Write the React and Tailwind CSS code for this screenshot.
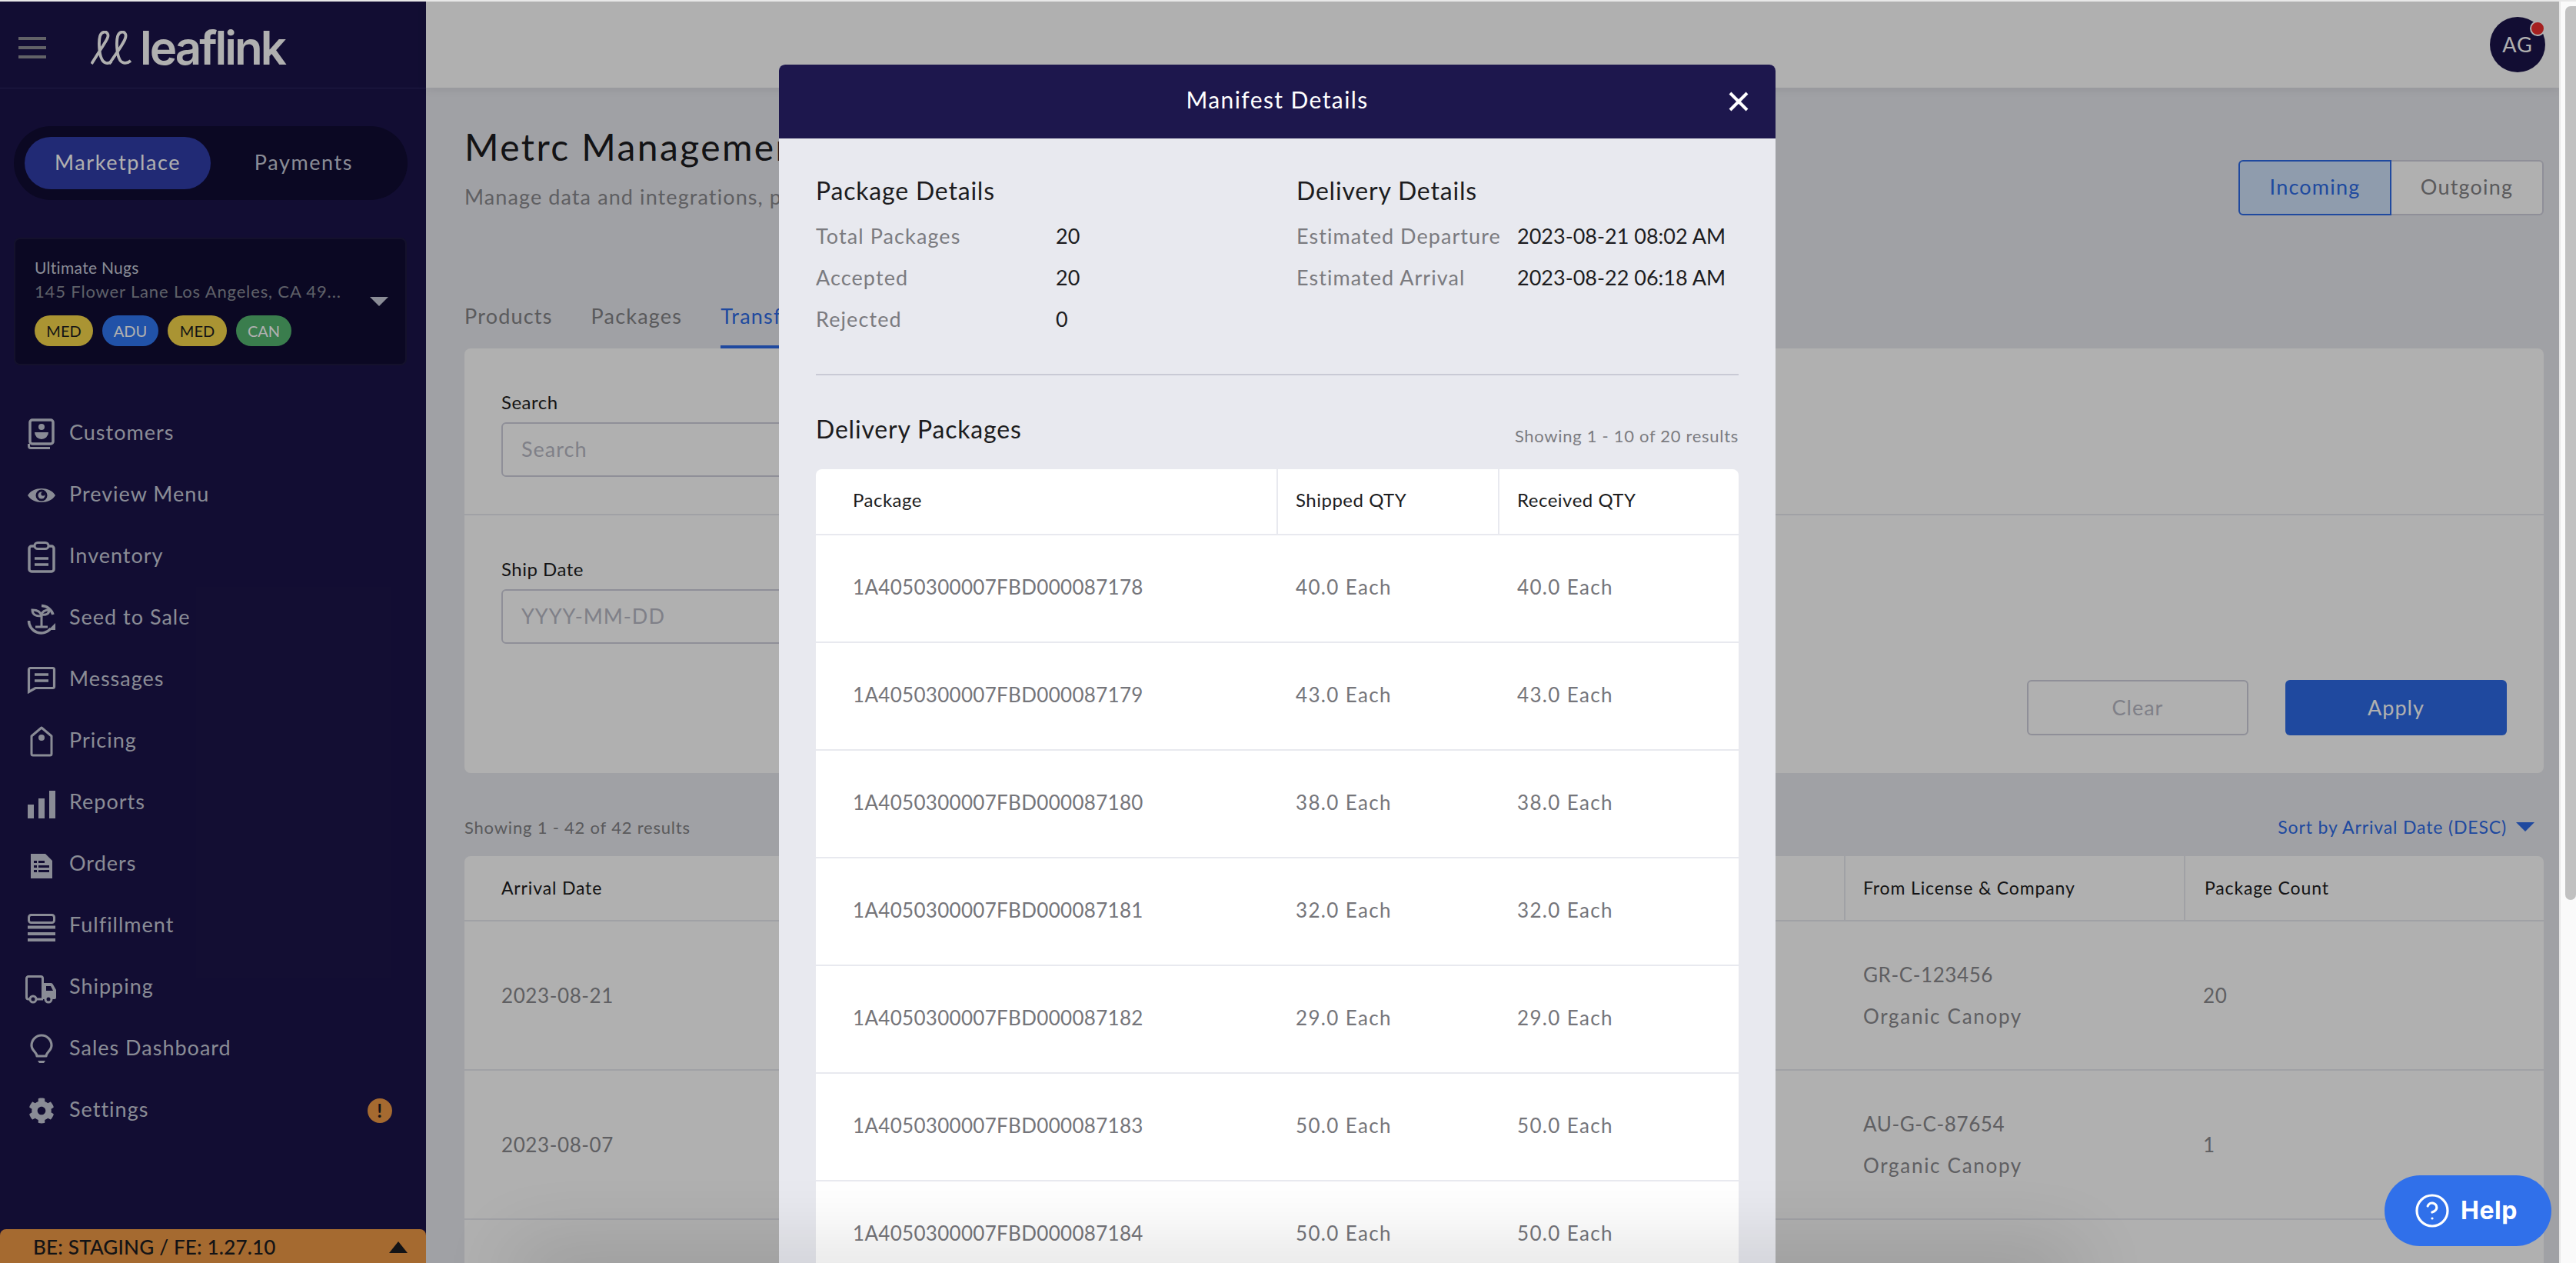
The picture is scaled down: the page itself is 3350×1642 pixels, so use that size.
import React from 'react';
import { CircleHelp } from 'lucide-react';
import { FaCog } from 'react-icons/fa';

const BG = '#1b144a';

// sidebar icons, all on the same 36x40 box
const icons = {
  customers: (
    <>
      <rect x="3" y="2" width="30" height="31" rx="3" fill="none" stroke="currentColor" strokeWidth="3.5" />
      <path d="M1.5 33v3a2.5 2.5 0 0 0 2.5 2.5h25" fill="none" stroke="currentColor" strokeWidth="3" />
      <circle cx="18" cy="11" r="4" fill="currentColor" />
      <path d="M9 18h18a9 9 0 0 1-18 0z" fill="currentColor" />
    </>
  ),
  eye: (
    <>
      <path d="M0 20C7 8 29 8 36 20 29 32 7 32 0 20z" fill="currentColor" />
      <circle cx="18" cy="20" r="7.5" fill={BG} />
      <circle cx="18" cy="20" r="4.5" fill="currentColor" />
      <circle cx="20" cy="18" r="2.6" fill={BG} />
    </>
  ),
  inventory: (
    <>
      <rect x="2" y="6" width="32" height="33" rx="3" fill="none" stroke="currentColor" strokeWidth="3.5" />
      <rect x="9" y="1.5" width="18" height="8" rx="4" fill={BG} stroke="currentColor" strokeWidth="3" />
      <path d="M9 22h18M9 30h18" stroke="currentColor" strokeWidth="3.5" />
    </>
  ),
  seed: (
    <>
      <path d="M18 3.5A16 16 0 0 1 33 15M1.5 23A16 16 0 0 0 30 33" fill="none" stroke="currentColor" strokeWidth="3.5" />
      <path d="M36 26v9h-9z" fill="currentColor" />
      <path d="M18 31V17M18 17c-1-6-5-8-12-8 0 6 4 8 12 8zM18 15c1-4 4-6 10-6 0 5-4 7-10 6z" fill="none" stroke="currentColor" strokeWidth="3" />
      <path d="M10 31h16" stroke="currentColor" strokeWidth="3" />
    </>
  ),
  messages: (
    <>
      <path d="M1.5 6.500a2 2 0 0 1 2-2h29a2 2 0 0 1 2 2v22a2 2 0 0 1-2 2H10l-8.500 5z" fill="none" stroke="currentColor" strokeWidth="3.2" />
      <path d="M9 13h18M9 21h18" stroke="currentColor" strokeWidth="3.5" />
    </>
  ),
  pricing: (
    <>
      <path d="M18 2l13 11v23a2 2 0 0 1-2 2H7a2 2 0 0 1-2-2V13z" fill="none" stroke="currentColor" strokeWidth="3" strokeLinejoin="round" />
      <circle cx="18" cy="15" r="4" fill="currentColor" />
    </>
  ),
  reports: (
    <>
      <rect x="0" y="22" width="8" height="18" fill="currentColor" />
      <rect x="14" y="14" width="8" height="26" fill="currentColor" />
      <rect x="28" y="4" width="8" height="36" fill="currentColor" />
    </>
  ),
  orders: (
    <>
      <path d="M4 6h19l9 9v23H4z" fill="currentColor" />
      <path d="M8 15h4v3H8zM14 15h8v3h-8zM8 21h4v3H8zM14 21h14v3H14zM8 27h4v3H8zM14 27h14v3H14z" fill={BG} />
    </>
  ),
  fulfillment: (
    <>
      <rect x="1.5" y="5.5" width="33" height="10" rx="3" fill="none" stroke="currentColor" strokeWidth="3" />
      <path d="M0 21.5h36M0 30h36M0 38h36" stroke="currentColor" strokeWidth="3.8" />
    </>
  ),
  shipping: (
    <>
      <path d="M4 35H1a2.500 2.500 0 0 1-2.500-2.500V8A2.500 2.500 0 0 1 1 5.500h16A2.500 2.500 0 0 1 19.500 8v27" fill="none" stroke="currentColor" strokeWidth="3" />
      <path d="M20 14h10a3 3 0 0 1 3 2l4 7v10a2 2 0 0 1-2 2H20z" fill="currentColor" />
      <path d="M24 18h6l3 6h-9z" fill={BG} />
      <path d="M4 35h16" stroke="currentColor" strokeWidth="3" />
      <circle cx="7" cy="35" r="4" fill={BG} stroke="currentColor" strokeWidth="3" />
      <circle cx="27" cy="35" r="4" fill={BG} stroke="currentColor" strokeWidth="3" />
    </>
  ),
  bulb: (
    <>
      <path d="M12 29c0-5-7-7-7-14a13 13 0 0 1 26 0c0 7-7 9-7 14z" fill="none" stroke="currentColor" strokeWidth="3.2" strokeLinejoin="round" />
      <path d="M13 35h10l-2 3h-6z" fill="currentColor" />
    </>
  ),
};

const navItems = [
  { label: 'Customers', icon: 'customers' },
  { label: 'Preview Menu', icon: 'eye' },
  { label: 'Inventory', icon: 'inventory' },
  { label: 'Seed to Sale', icon: 'seed' },
  { label: 'Messages', icon: 'messages' },
  { label: 'Pricing', icon: 'pricing' },
  { label: 'Reports', icon: 'reports' },
  { label: 'Orders', icon: 'orders' },
  { label: 'Fulfillment', icon: 'fulfillment' },
  { label: 'Shipping', icon: 'shipping' },
  { label: 'Sales Dashboard', icon: 'bulb' },
];

const badges = [
  { label: 'MED', cls: 'w-[76px] bg-[#f7d74a] text-[#1c1c20]' },
  { label: 'ADU', cls: 'w-[73px] bg-[#3178f3] text-white' },
  { label: 'MED', cls: 'w-[77px] bg-[#f7d74a] text-[#1c1c20]' },
  { label: 'CAN', cls: 'w-[72px] bg-[#54b570] text-white' },
];

const packages = [
  ['1A4050300007FBD000087178', '40.0 Each'],
  ['1A4050300007FBD000087179', '43.0 Each'],
  ['1A4050300007FBD000087180', '38.0 Each'],
  ['1A4050300007FBD000087181', '32.0 Each'],
  ['1A4050300007FBD000087182', '29.0 Each'],
  ['1A4050300007FBD000087183', '50.0 Each'],
  ['1A4050300007FBD000087184', '50.0 Each'],
];

const transfers = [
  { date: '2023-08-21', license: 'GR-C-123456', company: 'Organic Canopy', count: '20' },
  { date: '2023-08-07', license: 'AU-G-C-87654', company: 'Organic Canopy', count: '1' },
  { date: '', license: '', company: '', count: '' },
];

const Logo = () => (
  <div className="flex items-center gap-[10px] text-white">
    <svg viewBox="0 0 54 44" className="w-[54px] h-[44px]" fill="none" stroke="currentColor" strokeWidth="3.8">
      <path d="M1 43 13 24c7-11 11-16 9-20-2-4-8-3-10 3-2 7-1 23 2 29 2 6 8 8 13 4" />
      <path d="M24 43 37 24c7-11 10-16 8-20-2-4-8-3-10 3-2 7-1 23 2 29 2 6 9 8 15 3" />
    </svg>
    <span className="font-['Inter',sans-serif] font-semibold text-[60px] leading-[44px] tracking-[-3px]">leaflink</span>
  </div>
);

const Sidebar = () => (
  <aside className="w-[554px] shrink-0 flex flex-col bg-[#1b144a] text-[#c8cbd9]">
    <div className="h-[113px] shrink-0 flex items-center pl-[24px] pt-[7px] gap-[58px] border-b border-[#2d2860]">
      <div className="w-[36px] flex flex-col gap-[8px]">
        <div className="h-[4px] bg-[#8f8f96]" />
        <div className="h-[4px] bg-[#8f8f96]" />
        <div className="h-[4px] bg-[#8f8f96]" />
      </div>
      <Logo />
    </div>

    <div className="ml-[18px] mr-[24px] mt-[49px] h-[96px] rounded-full bg-[#100c33] p-[14px] flex text-[27px] tracking-[1.6px] leading-none">
      <div className="w-[242px] rounded-full bg-[#313daa] text-white flex items-center justify-center pb-[4px]">Marketplace</div>
      <div className="w-[242px] flex items-center justify-center pb-[4px]">Payments</div>
    </div>

    <div className="ml-[18px] mr-[25px] mt-[49px] h-[166px] rounded-[8px] bg-[#100c33] border-2 border-[#1d1a40] pl-[25px] pt-[22px] relative">
      <div className="text-[21px] leading-[30px] text-[#c8cbd9] tracking-[0.3px]">Ultimate Nugs</div>
      <div className="text-[22px] leading-[32px] text-[#8a8c98] tracking-[0.85px]">145 Flower Lane Los Angeles, CA 49...</div>
      <div className="flex gap-[12px] mt-[15px]">
        {badges.map((b, i) => (
          <span key={i} className={`h-[40px] rounded-full flex items-center justify-center text-[20px] ${b.cls}`}>{b.label}</span>
        ))}
      </div>
      <svg viewBox="0 0 24 12" className="absolute right-[22px] top-[75px] w-[24px] h-[12px]">
        <path d="M0 0h24L12 12z" fill="#c8cbd9" />
      </svg>
    </div>

    <nav className="mt-[49px] flex flex-col">
      {navItems.map(item => (
        <div key={item.label} className="h-[80px] flex items-center pl-[36px] gap-[18px] text-[27px] tracking-[1px]">
          <svg viewBox="0 0 36 40" className="w-[36px] h-[40px] overflow-visible">{icons[item.icon]}</svg>
          <span className="-mt-[4px]">{item.label}</span>
        </div>
      ))}
      <div className="h-[80px] flex items-center pl-[36px] gap-[18px] text-[27px] tracking-[1px] relative">
        <div className="w-[36px] flex justify-center"><FaCog size={34} /></div>
        <span className="-mt-[4px]">Settings</span>
        <span className="absolute left-[478px] top-[24px] w-[32px] h-[32px] rounded-full bg-[#f09a46] text-[#1c1c20] font-bold text-[24px] flex items-center justify-center">!</span>
      </div>
    </nav>

    <div className="mt-auto h-[44px] rounded-t-[8px] bg-[#f09a46] flex items-center justify-between pl-[43px] pr-[24px] pt-[3px] text-[#1c1c20] text-[26px] font-medium tracking-[0.2px]">
      <span>BE: STAGING / FE: 1.27.10</span>
      <svg viewBox="0 0 24 15" className="w-[24px] h-[15px]"><path d="M12 0l12 15H0z" fill="currentColor" /></svg>
    </div>
  </aside>
);

const Field = ({ label, placeholder }) => (
  <div>
    <label className="block text-[24px] leading-[30px] text-[#1c1c20] tracking-[0.5px]">{label}</label>
    <input
      readOnly
      placeholder={placeholder}
      className="block mt-[11px] w-[800px] h-[71px] rounded-[6px] border-2 border-[#cfd0dc] bg-white pl-[24px] pb-[2px] text-[27px] tracking-[1px] placeholder:text-[#b9bac6]"
    />
  </div>
);

const Main = () => (
  <main className="flex-1 min-w-0 flex flex-col bg-[#e8e9ef]">
    <header className="h-[112px] shrink-0 bg-white flex items-center justify-end pr-[18px] shadow-[0_2px_12px_rgba(0,0,0,0.08)]">
      <div className="relative w-[72px] h-[72px] rounded-full bg-[#1b144a] text-white flex items-center justify-center text-[27px] tracking-[1px]">
        AG
        <span className="absolute right-0 top-[5px] w-[20px] h-[20px] rounded-full bg-[#ef2f2f] border-2 border-white" />
      </div>
    </header>

    <div className="pl-[50px] pr-[20px]">
      <div className="flex justify-between items-start pt-[49px]">
        <div>
          <h1 className="text-[48px] leading-[56px] text-[#1c1c20] tracking-[2.4px]">Metrc Management</h1>
          <p className="mt-[19px] text-[27px] leading-[36px] text-[#8a8a8e] tracking-[1.1px]">Manage data and integrations, p</p>
        </div>
        <div className="mt-[45px] flex h-[72px] text-[27px] tracking-[1.2px]">
          <div className="w-[199px] flex items-center justify-center pb-[2px] rounded-l-[6px] border-2 border-[#2d6be6] bg-[#cfe3fb] text-[#2d6be6]">Incoming</div>
          <div className="w-[198px] flex items-center justify-center pb-[2px] rounded-r-[6px] border-2 border-l-0 border-[#cfd0dc] bg-white text-[#838386]">Outgoing</div>
        </div>
      </div>

      <div className="mt-[93px] h-[80px] flex items-end gap-[50px] text-[27px] tracking-[1.2px] text-[#838386]">
        <div className="pb-[22px]">Products</div>
        <div className="pb-[22px]">Packages</div>
        <div className="pb-[18px] border-b-4 border-[#2d6be6] text-[#2d6be6]">Transfers</div>
      </div>

      <section className="h-[552px] rounded-[8px] bg-white">
        <div className="pt-[55px] pl-[48px] h-[217px] border-b-2 border-[#e8e9ef]">
          <Field label="Search" placeholder="Search" />
        </div>
        <div className="pt-[55px] pl-[48px]">
          <Field label="Ship Date" placeholder="YYYY-MM-DD" />
        </div>
        <div className="mt-[47px] flex justify-end gap-[48px] pr-[48px] text-[27px] tracking-[1px]">
          <button className="w-[288px] h-[72px] rounded-[6px] border-2 border-[#cfd0dc] text-[#b9bac6]">Clear</button>
          <button className="w-[288px] h-[72px] rounded-[6px] bg-[#2d6be6] text-white">Apply</button>
        </div>
      </section>

      <div className="h-[108px] pt-[32px] flex items-center justify-between">
        <span className="text-[22px] text-[#838386] tracking-[0.8px]">Showing 1 - 42 of 42 results</span>
        <span className="flex items-center gap-[12px] pr-[12px] text-[23px] text-[#2d6be6] tracking-[0.85px]">
          Sort by Arrival Date (DESC)
          <svg viewBox="0 0 24 12" className="w-[24px] h-[12px]"><path d="M0 0h24L12 12z" fill="currentColor" /></svg>
        </span>
      </div>

      <section className="rounded-t-[8px] bg-white">
        <div className="h-[85px] grid grid-cols-[1794px_442px_1fr] border-b-2 border-[#e8e9ef] text-[23px] text-[#1c1c20] tracking-[0.85px]">
          <div className="pl-[48px] pt-[24px]">Arrival Date</div>
          <div className="pl-[23px] pt-[24px] border-l-2 border-[#e8e9ef]">From License &amp; Company</div>
          <div className="pl-[25px] pt-[24px] border-l-2 border-[#e8e9ef]">Package Count</div>
        </div>
        {transfers.map((t, i) => (
          <div key={i} className="h-[194px] grid grid-cols-[1794px_442px_1fr] items-center border-b-2 border-[#e8e9ef] text-[26px] text-[#8a8a8e] tracking-[0.6px]">
            <div className="pl-[48px]">{t.date}</div>
            <div className="pl-[25px] leading-[54px]">
              <div>{t.license}</div>
              <div className="tracking-[1.7px]">{t.company}</div>
            </div>
            <div className="pl-[25px]">{t.count}</div>
          </div>
        ))}
      </section>
    </div>
  </main>
);

const ManifestModal = () => (
  <div className="absolute left-[1013px] top-[82px] w-[1296px] h-[1700px] rounded-t-[8px] bg-[#e8e9ef]">
    <div className="relative h-[96px] rounded-t-[8px] bg-[#1d174d] flex items-center justify-center pb-[6px] text-white text-[30px] tracking-[1.4px]">
      Manifest Details
      <svg viewBox="0 0 26 26" className="absolute left-[1235px] top-[35px] w-[26px] h-[26px]">
        <path d="M2 2l22 22M24 2L2 24" stroke="currentColor" strokeWidth="4" />
      </svg>
    </div>

    <div className="px-[48px]">
      <div className="pt-[50px] h-[262px] grid grid-cols-[625px_1fr]">
        <div>
          <h3 className="text-[32px] leading-[36px] text-[#1c1c20] tracking-[0.8px]">Package Details</h3>
          <div className="mt-[14px] text-[27px] leading-[54px] grid grid-cols-[312px_1fr]">
            <span className="text-[#7b7b80] tracking-[1.1px]">Total Packages</span><span className="text-[#1c1c20]">20</span>
            <span className="text-[#7b7b80] tracking-[1.1px]">Accepted</span><span className="text-[#1c1c20]">20</span>
            <span className="text-[#7b7b80] tracking-[1.1px]">Rejected</span><span className="text-[#1c1c20]">0</span>
          </div>
        </div>
        <div>
          <h3 className="text-[32px] leading-[36px] text-[#1c1c20] tracking-[0.8px]">Delivery Details</h3>
          <div className="mt-[14px] text-[27px] leading-[54px] grid grid-cols-[287px_1fr]">
            <span className="text-[#7b7b80] tracking-[1.05px]">Estimated Departure</span><span className="text-[#1c1c20]">2023-08-21 08:02 AM</span>
            <span className="text-[#7b7b80] tracking-[1.05px]">Estimated Arrival</span><span className="text-[#1c1c20]">2023-08-22 06:18 AM</span>
          </div>
        </div>
      </div>
      <div className="mt-[44px] h-[2px] bg-[#c9cad5]" />

      <div className="mt-[52px] flex justify-between items-start">
        <h3 className="text-[32px] leading-[36px] text-[#1c1c20] tracking-[0.8px]">Delivery Packages</h3>
        <span className="mt-[12px] text-[22px] leading-[30px] text-[#7b7b80] tracking-[0.7px]">Showing 1 - 10 of 20 results</span>
      </div>

      <div className="mt-[28px] rounded-t-[8px] bg-white">
        <div className="h-[86px] grid grid-cols-[599px_288px_1fr] border-b-2 border-[#e8e9ef] text-[24px] text-[#1c1c20] tracking-[0.5px]">
          <div className="pl-[48px] pt-[22px]">Package</div>
          <div className="pl-[23px] pt-[22px] border-l-2 border-[#e8e9ef]">Shipped QTY</div>
          <div className="pl-[23px] pt-[22px] border-l-2 border-[#e8e9ef]">Received QTY</div>
        </div>
        {packages.map(([id, qty]) => (
          <div key={id} className="h-[140px] grid grid-cols-[599px_288px_1fr] items-center border-b-2 border-[#e8e9ef] text-[26px] text-[#75757a] pb-[4px]">
            <div className="pl-[48px] tracking-[0.3px]">{id}</div>
            <div className="pl-[25px] tracking-[1.35px]">{qty}</div>
            <div className="pl-[25px] tracking-[1.35px]">{qty}</div>
          </div>
        ))}
      </div>
    </div>
  </div>
);

export default function App() {
  return (
    <div className="w-[3350px] h-[1642px] flex flex-col overflow-hidden font-['Lato',sans-serif]">
      <div className="h-[2px] shrink-0 bg-[#e8e8e8]" />
      <div className="flex-1 min-h-0 flex">
        <div className="relative flex-1 min-w-0 flex overflow-hidden">
          <Sidebar />
          <Main />
          {/* backdrop */}
          <div className="absolute inset-0 bg-black/[0.31]" />
          <ManifestModal />
          {/* soft shadow that rises from the page bottom */}
          <div className="absolute top-full left-[680px] w-[2010px] h-[30px] shadow-[0_0_100px_10px_rgba(0,0,0,0.2)]" />
          <button className="absolute left-[3101px] top-[1526px] w-[217px] h-[92px] rounded-full bg-[#3070ea] text-white flex items-center justify-center gap-[13px] pr-[6px] font-['Inter',sans-serif] font-bold text-[32px] tracking-[0.5px]">
            <CircleHelp size={48} strokeWidth={1.6} />
            Help
          </button>
        </div>
        <div className="w-[22px] shrink-0 bg-[#fafafa] border-l-2 border-[#e8e8e8] pl-[6px] pt-[6px]">
          <div className="h-[1162px] w-[14px] rounded-l-[7px] rounded-b-[7px] bg-[#c1c1c1]" />
        </div>
      </div>
    </div>
  );
}
